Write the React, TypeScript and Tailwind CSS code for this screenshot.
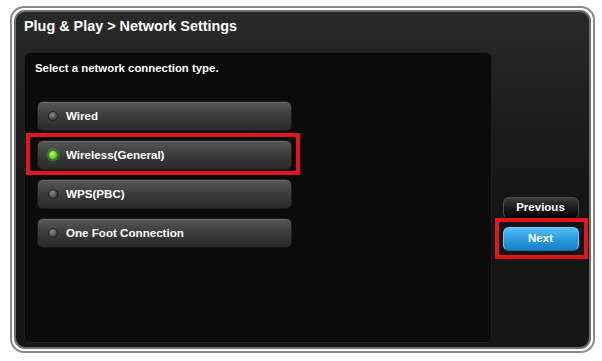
import React from "react";

type Option = { label: string; active?: boolean; marked?: boolean };

const options: Option[] = [
  { label: "Wired" },
  { label: "Wireless(General)", active: true, marked: true },
  { label: "WPS(PBC)" },
  { label: "One Foot Connection" },
];

function OptionButton({ label, active, marked }: Option) {
  return (
    <div className="relative w-fit">
      <div className="flex h-[30px] w-[255px] items-center rounded-[6px] border border-[#1c1c1c] bg-gradient-to-b from-[#575757] via-[#3c3c3c] to-[#2a2a2a] pl-[10px] shadow-[inset_0_1px_0_#6a6a6a]">
        {/* indicador de seleção */}
        <span
          className={
            active
              ? "h-[10px] w-[10px] rounded-full border border-[#3d8a1c] bg-[radial-gradient(circle_at_40%_35%,#b6f57c,#5fcf25_60%,#3a9a12)] shadow-[0_0_3px_#6fe02f]"
              : "h-[10px] w-[10px] rounded-full border border-[#222] bg-[radial-gradient(circle_at_40%_35%,#8a8a8a,#4e4e4e_60%,#333)]"
          }
        />
        <span className="ml-[8px] text-[11.6px] font-bold text-white">{label}</span>
      </div>
      {marked && (
        <div className="pointer-events-none absolute -bottom-[5px] -left-[11px] -right-[8px] -top-[7px] border-4 border-[#e3161f]" />
      )}
    </div>
  );
}

export default function App() {
  return (
    <div className="h-[361px] w-[602px] bg-white pl-[10px] pt-[6px] font-['Liberation_Sans',Arial,sans-serif]">
      <div className="h-[347px] w-[585px] rounded-[14px] border-2 border-[#8a8a8a] bg-white p-[2px]">
        <div className="flex h-full flex-col rounded-[11px] border-2 border-[#6e6e6e] bg-gradient-to-b from-[#2a2a2a] via-[#161616] to-[#151515] to-[15%]">
          <div className="h-[40px] shrink-0 pl-[8px] pt-[6px] text-[14.4px] leading-[16px] font-bold text-white">
            Plug &amp; Play &gt; Network Settings
          </div>

          <div className="flex flex-1 pb-[4px]">
            <div className="ml-[8px] flex w-[468px] shrink-0 flex-col rounded-[6px] border border-[#1f1f1f] bg-[#0b0b0b]">
              <p className="pl-[10px] pt-[8px] text-[11.4px] leading-[14px] font-bold text-white">
                Select a network connection type.
              </p>
              <div className="mt-[26px] flex flex-col gap-[9px] pl-[12px]">
                {options.map((o) => (
                  <OptionButton key={o.label} {...o} />
                ))}
              </div>
            </div>

            <div className="flex flex-1 flex-col items-center pt-[145px]">
              <button className="h-[22px] w-[76px] rounded-[6px] border border-[#4a4a4a] border-b-[#111] bg-gradient-to-b from-[#3c3c3c] via-[#1a1a1a] to-[#050505] text-[11.5px] font-bold text-white">
                Previous
              </button>
              <div className="relative mt-[6px]">
                <button className="h-[24px] w-[76px] rounded-[6px] border border-[#6cc8f6] border-b-[#1470b0] bg-gradient-to-b from-[#55bff4] via-[#2a9be0] to-[#1a7fc6] text-[11.5px] font-bold text-white">
                  Next
                </button>
                <div className="pointer-events-none absolute -bottom-[8px] -left-[8px] -right-[9px] -top-[7px] border-4 border-[#e3161f]" />
              </div>
            </div>
          </div>
        </div>
      </div>
    </div>
  );
}
